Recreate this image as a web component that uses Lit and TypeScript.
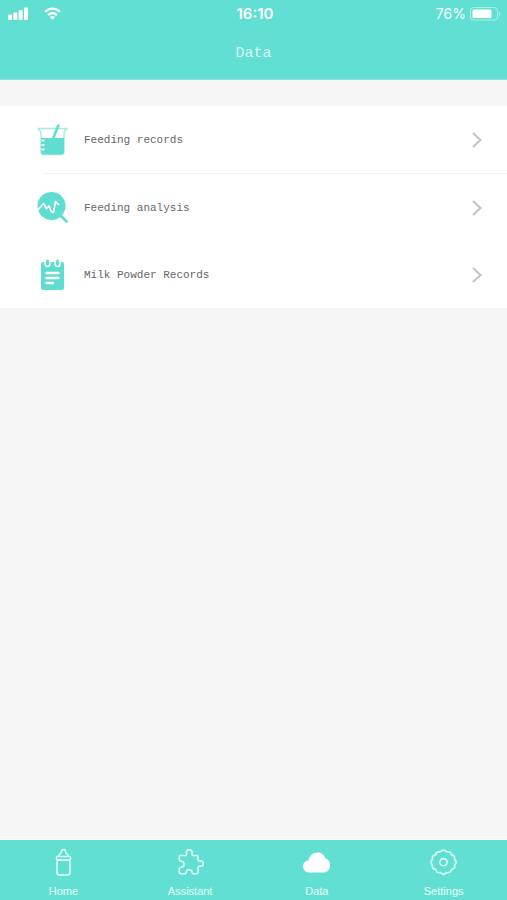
import { LitElement, html, css, svg } from "lit";
import { customElement } from "lit/decorators.js";

const beaker = svg`
  <path d="M1 4.500C3 6 4 7 4 10V27.500Q4 30.500 7 30.500H24Q27 30.500 27 27.500V10C27 7 28 6 30 4.500Z" fill="#fff" stroke="#a4ebe1" stroke-width="1.400" stroke-linejoin="round"/>
  <path d="M4 14H27V27.500Q27 30.500 24 30.500H7Q4 30.500 4 27.500V26.500H7.500V24.500H4V22H7.500V20H4V17.500H7.500V15.500H4Z" fill="#5eddd0"/>
  <path d="M16.500 13.500L21.300 1.500" stroke="#5eddd0" stroke-width="2.600" stroke-linecap="round"/>`;

const analysis = svg`
  <path d="M23 23L29.500 29.500" stroke="#5eddd0" stroke-width="2.800" stroke-linecap="round"/>
  <circle cx="14.500" cy="14" r="14" fill="#5eddd0"/>
  <path d="M1 18L6.500 11.500L9.500 16.500L12 14L14.500 20L16.500 20.500L18.500 9.500L21.500 12.500" fill="none" stroke="#fff" stroke-width="1.700" stroke-linecap="round" stroke-linejoin="round"/>`;

const notepad = svg`
  <rect x="4" y="3" width="23" height="28" rx="2" fill="#5eddd0"/>
  <path d="M8 2V4.500Q8 7.500 10.500 7.500T13 4.500V2M18 2V4.500Q18 7.500 20.500 7.500T23 4.500V2" stroke="#fff" stroke-width="1.500"/>
  <path d="M10.500 1.800V4.500M20.500 1.800V4.500" stroke="#5eddd0" stroke-width="2.600" stroke-linecap="round"/>
  <path d="M9.500 14H21.500M9.500 19H21.500M9.500 24H16" stroke="#fff" stroke-width="2.400" stroke-linecap="round"/>`;

const bottle = svg`
  <rect x="8" y="12" width="13" height="15" rx="2.500"/>
  <rect x="7.500" y="8.500" width="14" height="3.500" rx="1"/>
  <path d="M9.500 8.500C9.500 6 12.500 6 12.500 3.500Q12.500 1.500 14.500 1.500Q16.500 1.500 16.500 3.500C16.500 6 19.500 6 19.500 8.500"/>`;

const puzzle = svg`
  <path d="M4.500 7.500H9Q11 7.500 10.500 5.300C10 3 11.400 1.700 13.200 1.700S16.400 3 16 5.300Q15.500 7.500 17.500 7.500H20.500Q22 7.500 22 9V11.500Q22 13.300 23.800 13C26 12.600 27.300 13.800 27.300 15.700S26 18.800 23.800 18.300Q22 18 22 19.800V24Q22 25.800 20.500 25.800H17.500Q16.300 25.800 16.200 24.500C16 22.800 14.800 21.800 13.200 21.800S10.300 22.800 10.200 24.500Q10 25.800 9 25.800H4.800Q3.300 25.800 3.300 24.300V20.800Q3.300 19.500 5 19.300C7 19 8 17.800 8 16.200S7 13.300 5 13.200Q3.300 13 3.300 11.500V9Q3.300 7.500 4.500 7.500Z"/>`;

const cloud = svg`
  <path fill="#fff" stroke="none" d="M7.500 24.500C3.500 24.500 1 21.500 1 18.500C1 15 3.500 12.700 6.500 12.500C7.500 8 10.800 4.500 15.500 4.500C19.500 4.500 22.300 7 23.300 10.300C26.500 11 28 13.800 28 17.200C28 21.500 25.200 24.500 21.500 24.500Z"/>`;

const gear = svg`
  <path d="M11.600 3.800Q14.500 0.200 17.400 3.800Q22 3.200 22.300 6.900Q26.600 7.500 25.500 11.300Q28.700 14.200 25.500 17Q26.600 20.800 22.300 21.500Q22 25.200 17.400 24.600Q14.500 28.200 11.600 24.600Q7 25.200 6.700 21.500Q2.400 20.800 3.500 17Q0.300 14.200 3.500 11.300Q2.400 7.500 6.700 6.900Q7 3.200 11.600 3.800Z"/>
  <circle cx="14.500" cy="14.200" r="3.600"/>`;

const rows = [
  { label: "Feeding records", icon: beaker },
  { label: "Feeding analysis", icon: analysis },
  { label: "Milk Powder Records", icon: notepad },
];

const tabs = [
  { label: "Home", icon: bottle },
  { label: "Assistant", icon: puzzle },
  { label: "Data", icon: cloud },
  { label: "Settings", icon: gear },
];

@customElement("app-root")
export class AppRoot extends LitElement {
  static styles = css`
    :host {
      display: flex;
      flex-direction: column;
      min-height: 100vh;
      background: #f6f6f6;
      font-family: Inter, "Liberation Sans", sans-serif;
    }
    svg { display: block; flex: none; }
    header {
      background: #62dfd3;
      color: #fff;
      border-bottom: 1px solid #8edfd7;
    }
    .status {
      display: grid;
      grid-template-columns: 1fr auto 1fr;
      align-items: center;
      height: 28px;
      padding: 0 5px 0 8px;
    }
    .signals { display: flex; align-items: center; gap: 15px; }
    .time { font-size: 15px; font-weight: 600; line-height: 28px; }
    .power {
      display: flex;
      align-items: center;
      justify-content: flex-end;
      gap: 4px;
      font-size: 14px;
      line-height: 28px;
    }
    h1 {
      margin: 0;
      font: 400 15px/51px "Liberation Mono", monospace;
      text-align: center;
      color: #d9faf5;
    }
    main { flex: 1; padding-top: 26px; }
    ul { margin: 0; padding: 0; list-style: none; background: #fff; }
    .row {
      display: flex;
      align-items: center;
      box-sizing: border-box;
      width: 100%;
      height: 67px;
      padding: 0 24px 0 37px;
      border: 0;
      background: none;
      font: 11px/16px "Liberation Mono", monospace;
      color: #666;
      text-align: left;
      cursor: pointer;
    }
    .label { flex: 1; padding-left: 15px; }
    .divider { height: 1px; margin-left: 43px; background: #f1f1f1; }
    nav {
      display: grid;
      grid-template-columns: repeat(4, 1fr);
      background: #62dfd3;
      border-top: 1px solid #fff;
    }
    .tab {
      display: flex;
      flex-direction: column;
      align-items: center;
      gap: 8px;
      height: 60px;
      box-sizing: border-box;
      padding: 8px 0 0;
      color: #e9fffb;
      font: 11px/12px "Liberation Sans", sans-serif;
      text-decoration: none;
    }
  `;

  render() {
    return html`
      <header>
        <div class="status">
          <div class="signals">
            <svg width="21" height="14" viewBox="0 0 21 14" fill="#fff" aria-label="Signal">
              <rect y="7.500" width="4" height="5.500" rx="1"/>
              <rect x="5.300" y="5.500" width="4" height="7.500" rx="1"/>
              <rect x="10.600" y="3" width="4" height="10" rx="1"/>
              <rect x="16" y="0.500" width="4" height="12.500" rx="1"/>
            </svg>
            <svg width="18" height="14" viewBox="0 0 18 14" fill="none" stroke="#fff" stroke-width="2.300" aria-label="Wi-Fi">
              <path d="M1 4.700Q8.500-1.500 16 4.700M4 8Q8.500 4.300 13 8"/>
              <path d="M5.800 10Q8.500 8 11.200 10L8.500 12.800Z" fill="#fff" stroke="none"/>
            </svg>
          </div>
          <span class="time">16:10</span>
          <div class="power">
            <span>76%</span>
            <svg width="32" height="14" viewBox="0 0 32 14" aria-label="Battery">
              <rect x="0.500" y="0.500" width="27" height="12.500" rx="3" fill="none" stroke="#aef0e8"/>
              <rect x="2.500" y="2.500" width="19" height="8.500" rx="1.500" fill="#fff"/>
              <path d="M29 4.500Q31.500 6.800 29 9Z" fill="#aef0e8"/>
            </svg>
          </div>
        </div>
        <h1>Data</h1>
      </header>
      <main>
        <ul>
          ${rows.map(
            (row, i) => html`<li>
              ${i === 1 ? html`<div class="divider"></div>` : ""}
              <button class="row">
                <svg width="32" height="32" viewBox="0 0 32 32" fill="none">${row.icon}</svg>
                <span class="label">${row.label}</span>
                <svg width="12" height="18" viewBox="0 0 12 18" fill="none" stroke="#c4c4c4" stroke-width="2">
                  <path d="M2 2L9.500 9L2 16"/>
                </svg>
              </button>
            </li>`
          )}
        </ul>
      </main>
      <nav>
        ${tabs.map(
          (tab) => html`<a class="tab" href="#">
            <svg width="29" height="29" viewBox="0 0 29 29" fill="none" stroke="#dcfffa" stroke-width="1.600" stroke-linejoin="round">${tab.icon}</svg>
            <span>${tab.label}</span>
          </a>`
        )}
      </nav>
    `;
  }
}
